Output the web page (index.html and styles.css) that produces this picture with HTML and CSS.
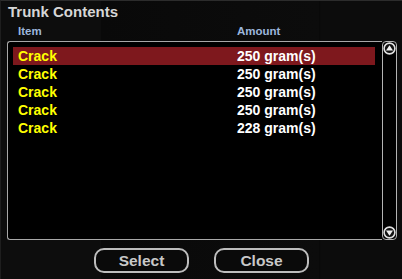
FILE: index.html
```html
<!DOCTYPE html>
<html lang="en">
<head>
    <meta charset="UTF-8">
    <meta name="viewport" content="width=device-width, initial-scale=1.0">
    <title>Trunk Contents</title>
    <link rel="stylesheet" href="styles.css">
</head>
<body>

    <div class="window">
        <!-- Title -->
        <div class="title">Trunk Contents</div>

        <!-- Column headers -->
        <div class="columns">
            <span class="col-item">Item</span>
            <span class="col-amount">Amount</span>
        </div>

        <!-- List with scrollbar -->
        <div class="list-wrap">
            <div class="list">
                <div class="row selected">
                    <span class="item">Crack</span>
                    <span class="amount">250 gram(s)</span>
                </div>
                <div class="row">
                    <span class="item">Crack</span>
                    <span class="amount">250 gram(s)</span>
                </div>
                <div class="row">
                    <span class="item">Crack</span>
                    <span class="amount">250 gram(s)</span>
                </div>
                <div class="row">
                    <span class="item">Crack</span>
                    <span class="amount">250 gram(s)</span>
                </div>
                <div class="row">
                    <span class="item">Crack</span>
                    <span class="amount">228 gram(s)</span>
                </div>
            </div>
            <div class="scrollbar">
                <svg class="arrow" width="13" height="13" viewBox="0 0 13 13">
                    <circle cx="6.5" cy="6.5" r="5.4" fill="#111" stroke="#e0e0e0" stroke-width="1.6"/>
                    <polygon points="6.5,3.2 10,8.6 3,8.6" fill="#f0f0f0"/>
                </svg>
                <svg class="arrow" width="13" height="13" viewBox="0 0 13 13">
                    <circle cx="6.5" cy="6.5" r="5.4" fill="#111" stroke="#e0e0e0" stroke-width="1.6"/>
                    <polygon points="6.5,9.8 10,4.4 3,4.4" fill="#f0f0f0"/>
                </svg>
            </div>
        </div>

        <!-- Buttons -->
        <div class="buttons">
            <button class="btn">Select</button>
            <button class="btn">Close</button>
        </div>
    </div>

</body>
</html>
```

FILE: styles.css
```css
* {
    box-sizing: border-box;
    margin: 0;
    padding: 0;
}

body {
    width: 402px;
    height: 279px;
    background-color: #0b0b0b;
    font-family: "Liberation Sans", Arial, sans-serif;
    font-weight: bold;
    overflow: hidden;
}

.window {
    height: 279px;
    border-top: 1px solid #2c2c2c;
    border-left: 1px solid #1e1e1e;
    background: linear-gradient(90deg, #0d0d0d 0, #0d0d0d 100px, #090909 100px, #0c0c0c 318px, #080808 318px, #0c0c0c 320px);
}

.title {
    padding: 3px 0 0 7px;
    height: 24px;
    font-size: 15px;
    line-height: 16px;
    color: #d6d6d6;
}

.columns {
    display: flex;
    height: 16px;
    font-size: 11.5px;
    line-height: 12px;
    color: #9cb6dc;
}

.col-item {
    width: 236px;
    padding-left: 17px;
}

.list-wrap {
    display: flex;
    margin-left: 6px;
    width: 390px;
    height: 199px;
}

.list {
    width: 376px;
    height: 199px;
    border: 1px solid #a8a8a8;
    border-right: none;
    border-radius: 3px 0 0 3px;
    background-color: #000;
    padding: 5px 7px 0 5px;
}

.row {
    display: flex;
    height: 18px;
    font-size: 14px;
    line-height: 18px;
}

.row.selected {
    background-color: #7e181d;
}

.item {
    width: 224px;
    padding-left: 5px;
    color: #ffff00;
}

.amount {
    color: #ffffff;
}

.scrollbar {
    width: 15px;
    height: 199px;
    border: 1px solid #b4b4b4;
    border-radius: 4px;
    background-color: #000;
    display: flex;
    flex-direction: column;
    justify-content: space-between;
    align-items: center;
}

.arrow {
    display: block;
}

.buttons {
    display: flex;
    justify-content: center;
    gap: 25px;
    margin-top: 8px;
}

.btn {
    width: 95px;
    height: 25px;
    border: 2px solid #bdbdbd;
    border-radius: 10px;
    background-color: #0a0a0a;
    color: #c8c8c8;
    font-family: "Liberation Sans", Arial, sans-serif;
    font-weight: bold;
    font-size: 15.5px;
    line-height: 20px;
}
```
